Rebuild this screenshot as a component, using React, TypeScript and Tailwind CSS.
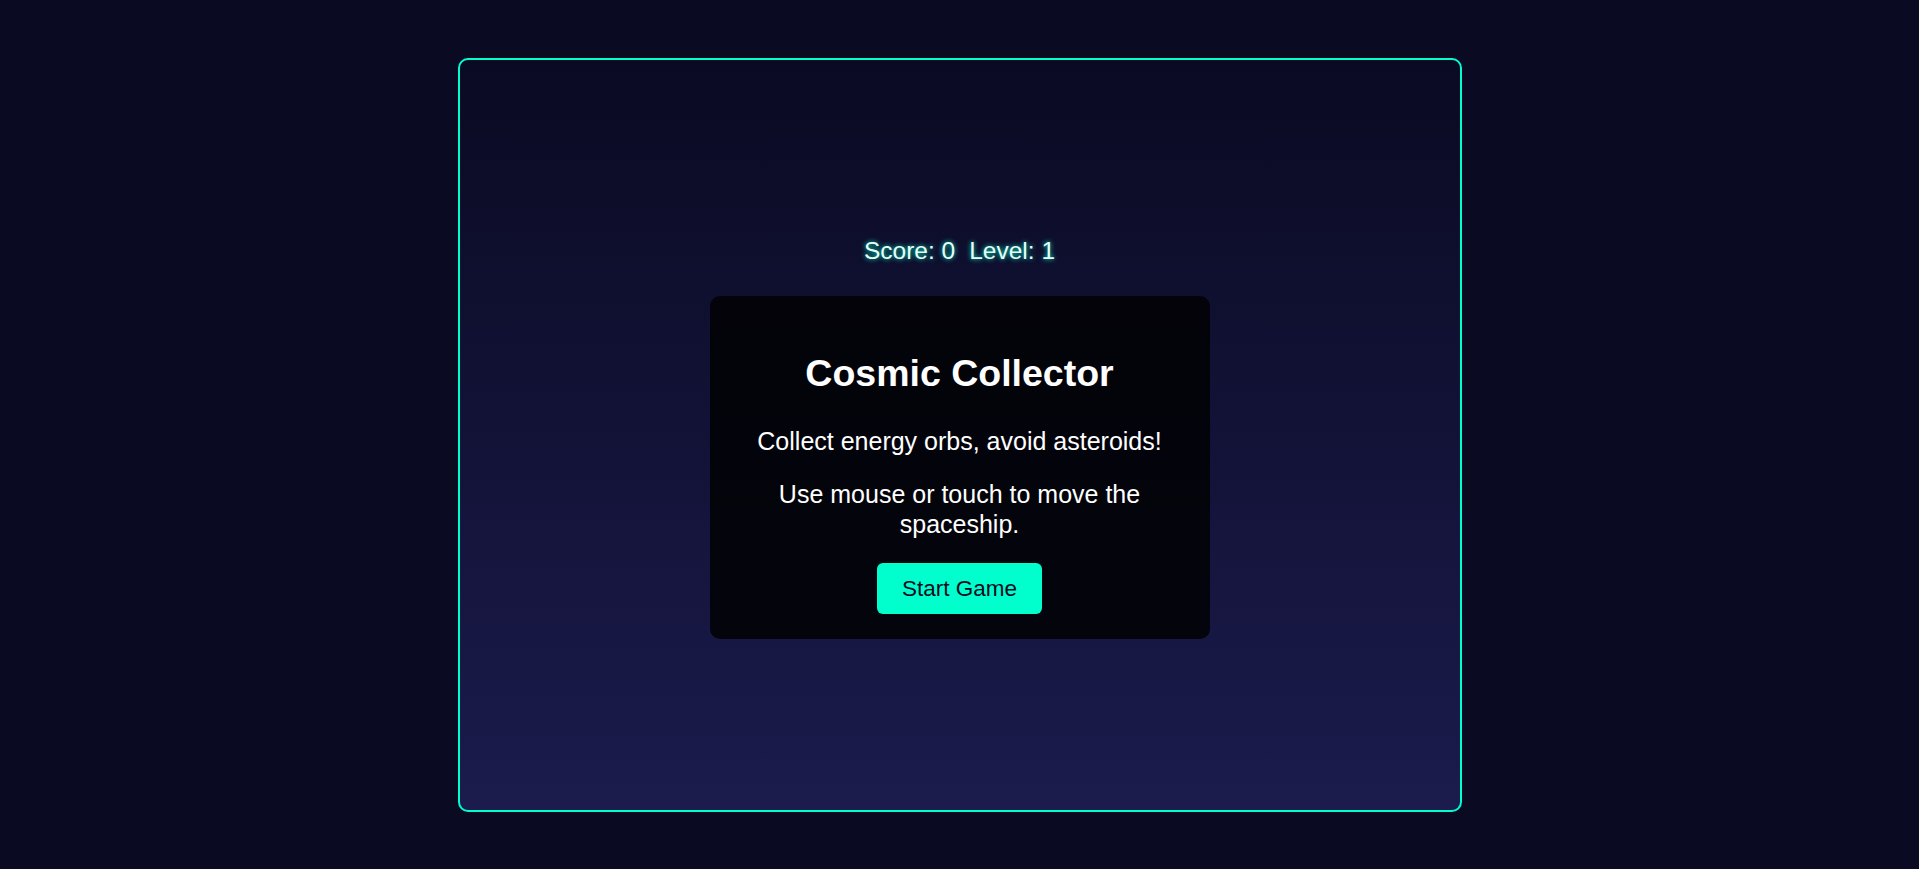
import React from "react";

const App = () => {
    return (
        <div
            className="h-[869px] bg-[#0a0a23] flex justify-center pt-[58px]"
            style={{ fontFamily: '"Liberation Sans", Arial, sans-serif' }}
        >
            <div className="w-[1004px] h-[754px] border-2 border-[#00ffcc] rounded-[10px] bg-gradient-to-b from-[#0a0a23] to-[#1b1b4d] flex flex-col items-center pt-[177px]">
                <div className="flex text-[24.5px] leading-[28px] text-[#e6fffa] [text-shadow:0_0_5px_#00ffcc]">
                    <span>Score: 0</span>
                    <span className="ml-[14px]">Level: 1</span>
                </div>

                <div className="mt-[31px] w-[500px] h-[343px] bg-black/80 rounded-[10px] flex flex-col items-center text-white text-center pt-[56px] px-[25px]">
                    <h1 className="text-[37.5px] leading-[43px] font-bold">Cosmic Collector</h1>
                    <p className="mt-[32px] text-[25px] leading-[29px]">Collect energy orbs, avoid asteroids!</p>
                    <p className="mt-[24px] text-[25px] leading-[29.5px] px-[40px]">Use mouse or touch to move the spaceship.</p>
                    <button className="mt-[24px] bg-[#00ffcc] text-[#0a0a23] text-[22.5px] leading-[26px] px-[25px] py-[12.5px] rounded-[6px]">
                        Start Game
                    </button>
                </div>
            </div>
        </div>
    );
};

export default App;
